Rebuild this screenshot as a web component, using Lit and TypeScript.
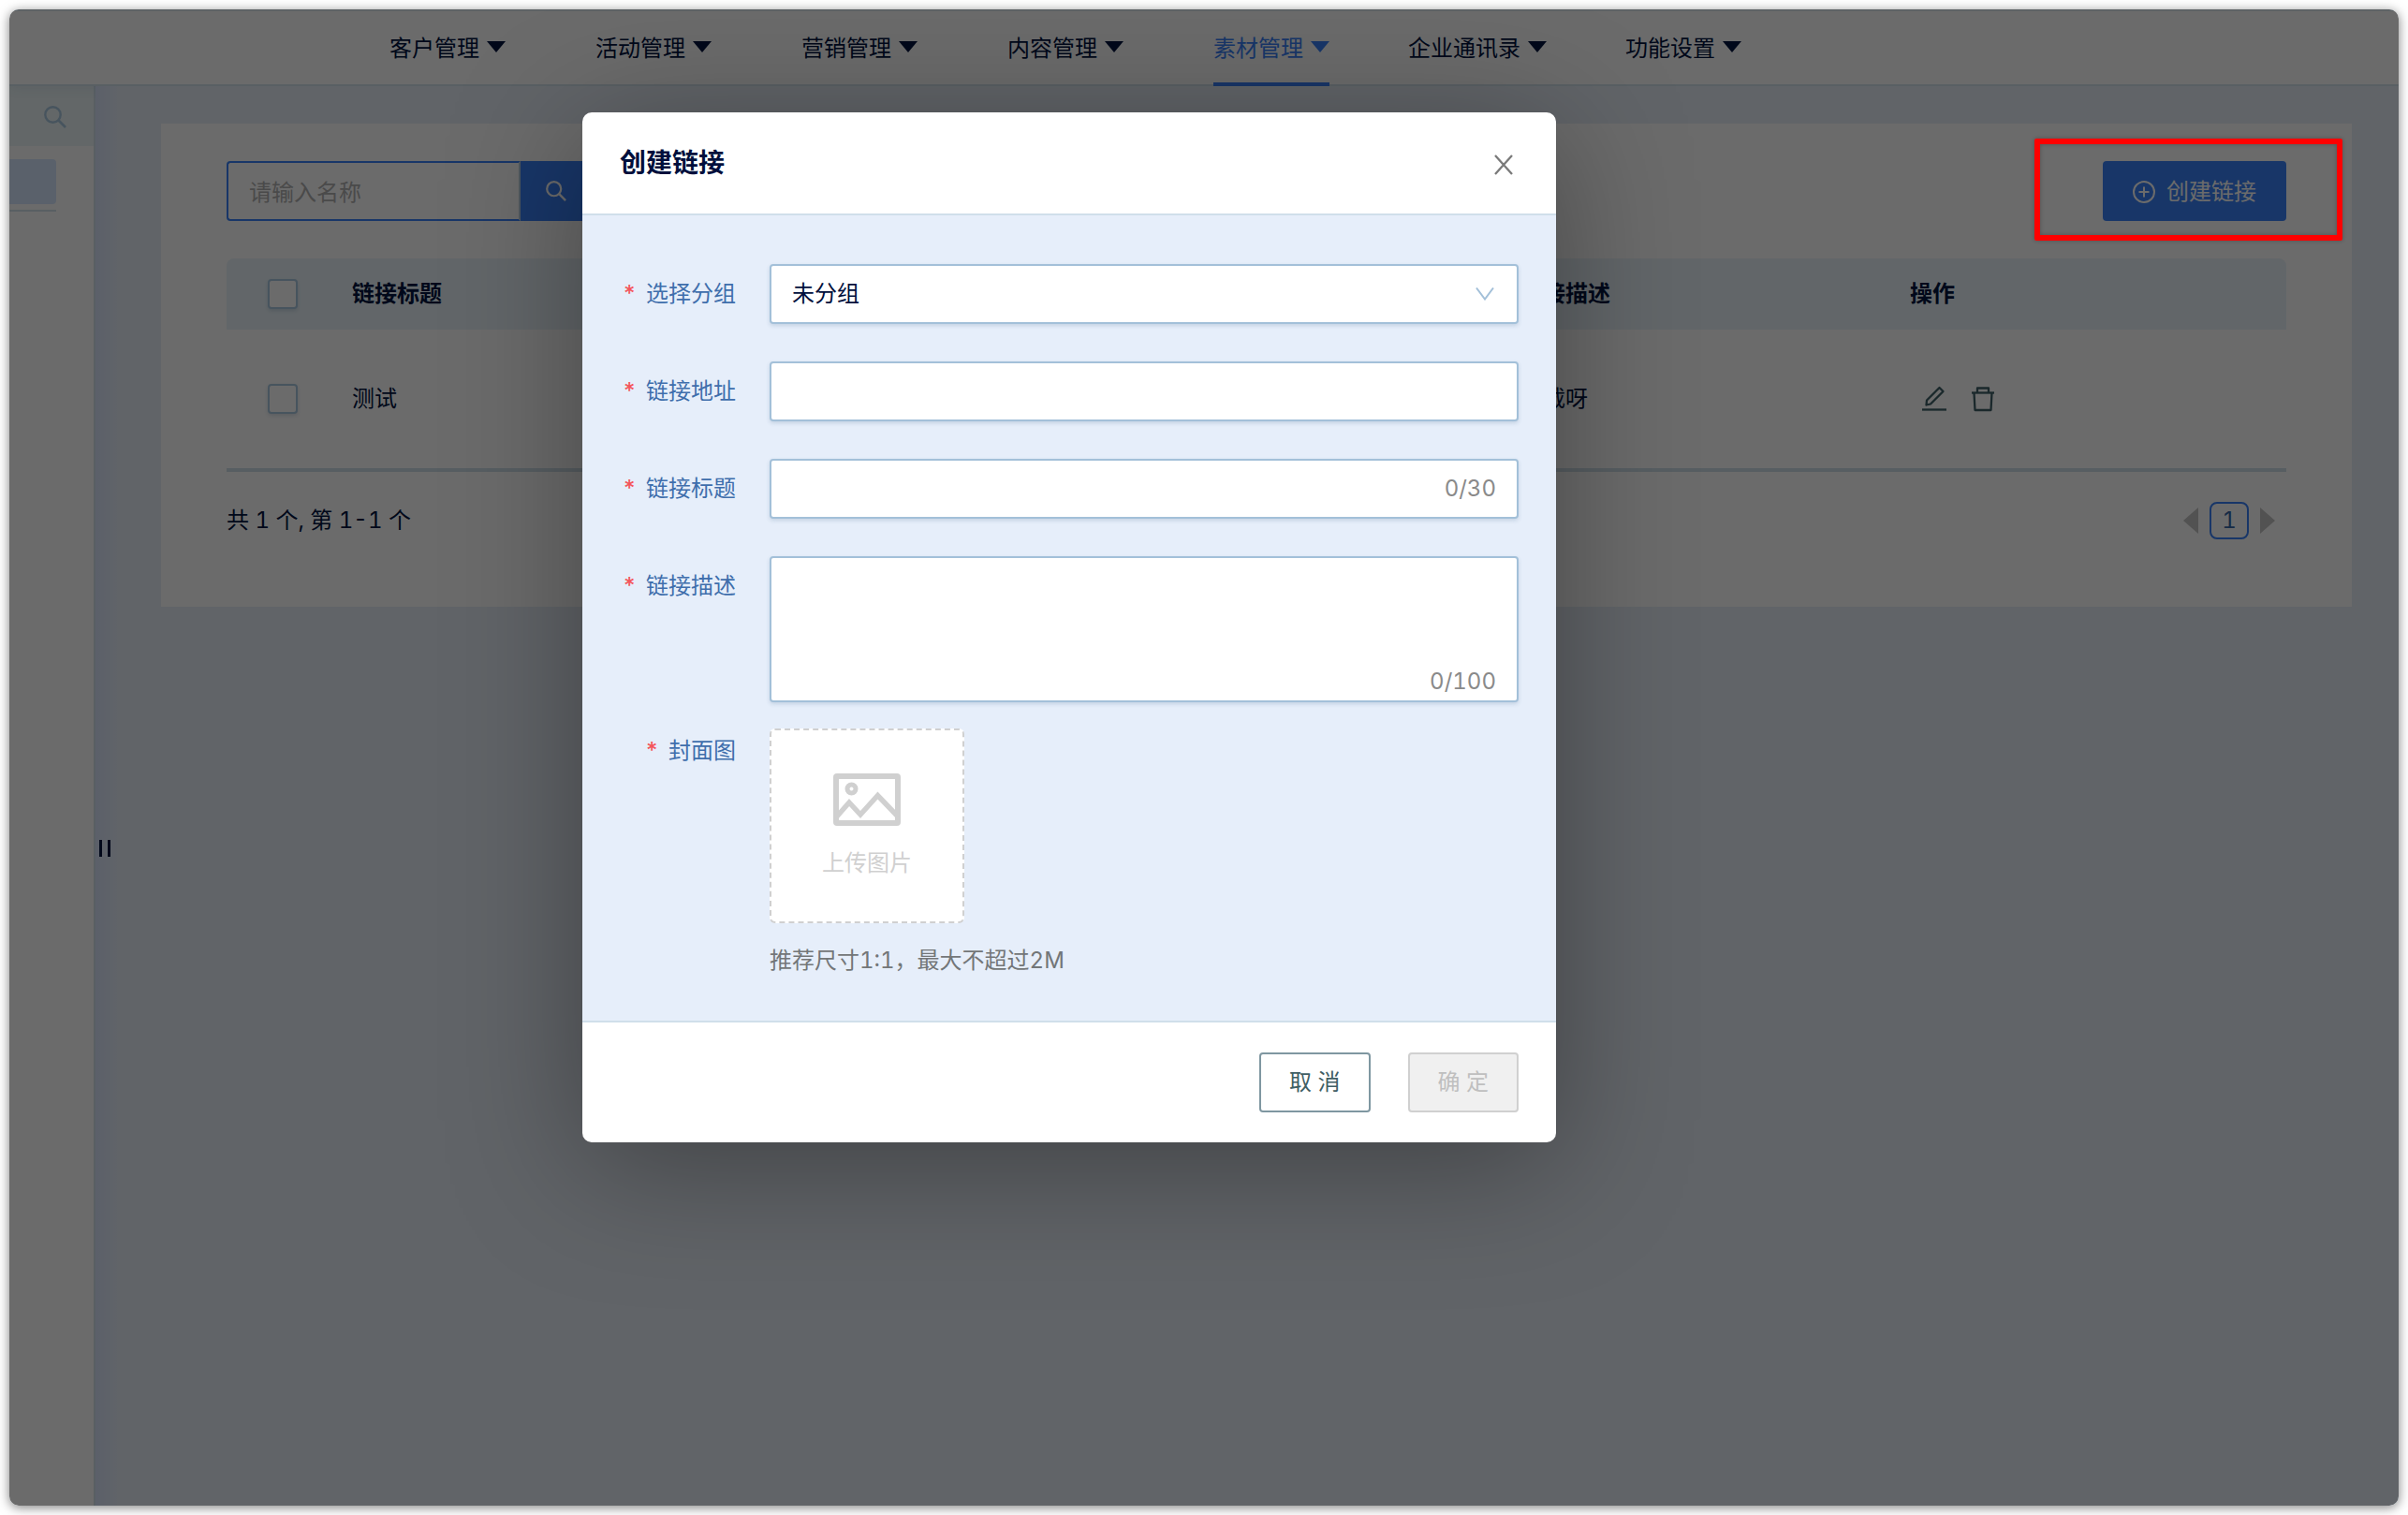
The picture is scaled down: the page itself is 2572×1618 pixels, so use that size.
import { LitElement, html, css, svg } from "lit";
import { customElement } from "lit/decorators.js";
import { classMap } from "lit/directives/class-map.js";

const NAV = ["客户管理", "活动管理", "营销管理", "内容管理", "素材管理", "企业通讯录", "功能设置"];
const ACTIVE = "素材管理";

const searchShape = svg`
  <circle cx="9.5" cy="9.5" r="8.200" fill="none" stroke="currentColor" stroke-width="2.400"/>
  <path d="M15.5 15.5 L23 23" fill="none" stroke="currentColor" stroke-width="2.600"/>`;

@customElement("app-root")
export class AppRoot extends LitElement {
  static styles = css`
    :host {
      display: block;
      font-family: Inter, "Noto Sans CJK SC", sans-serif;
      font-size: 24px;
      font-variant-numeric: tabular-nums;
      line-height: 36px;
      color: #00143f;
    }
    * { box-sizing: border-box; }
    button, input, select, textarea { font: inherit; color: inherit; margin: 0; }
    button { background: none; border: 0; padding: 0; }
    svg { display: block; flex: none; }
    .page {
      display: flex;
      min-height: 100vh;
      padding: 10px;
      background: #fff;
    }
    .window {
      position: relative;
      flex: 1;
      display: flex;
      flex-direction: column;
      min-width: 0;
      border-radius: 10px;
      overflow: hidden;
      background: #e7eff8;
    }
    .frame {
      flex: 1;
      display: flex;
      min-width: 0;
      border-radius: 10px;
      box-shadow: 0 2px 12px rgba(0, 0, 0, 0.5);
    }

    .topbar {
      display: flex;
      height: 82px;
      padding-left: 358px;
      background: #fff;
      border-top: 2px solid #e0ecf2;
      border-bottom: 2px solid #d3e2ec;
      box-shadow: 0 2px 12px rgba(60, 100, 140, 0.1);
      position: relative;
    }
    .nav-cell { width: 220px; display: flex; justify-content: center; margin-bottom: -2px; }
    .nav-link {
      display: flex;
      align-items: center;
      gap: 8px;
      color: inherit;
      text-decoration: none;
      white-space: nowrap;
      border-bottom: 4px solid transparent;
      padding-top: 4px;
    }
    .nav-link.active { color: #3a82f8; border-color: #3a82f8; }
    .nav-arrow { margin-bottom: 4px; }

    .body { flex: 1; display: flex; }
    .side {
      width: 92px;
      background: #fff;
      border-right: 2px solid #d3e2ec;
    }
    .side-search {
      display: flex;
      width: 100%;
      height: 64px;
      padding: 21px 0 0 37px;
      background: #ebf5f7;
      color: #a9c8e0;
    }
    .side-item {
      display: block;
      width: 50px;
      height: 48px;
      margin-top: 14px;
      background: #d6e8ff;
      border-radius: 0 4px 4px 0;
    }
    .side-rule { width: 50px; margin-top: 6px; border-top: 2px solid #d3e2ec; }
    .main {
      position: relative;
      flex: 1;
      padding: 40px 50px 40px 70px;
      background: linear-gradient(90deg, #dae4fc, #e7eff8 26px);
    }
    .grip {
      position: absolute;
      left: 4px;
      top: calc(50% + 47px);
      display: flex;
      gap: 6px;
    }
    .grip-bar { width: 3px; height: 18px; background: #00143f; }

    .card { background: #fff; padding: 40px 70px 72px; }
    .toolbar { display: flex; justify-content: space-between; }
    .search { display: flex; }
    .search-input {
      width: 314px;
      height: 64px;
      padding: 2px 22px 0;
      background: #fff;
      border: 2px solid #3a82f8;
      border-right-color: #b9cfe0;
      border-radius: 4px 0 0 4px;
    }
    .search-input::placeholder { color: #b0b0b0; opacity: 1; }
    .search-btn {
      display: grid;
      place-items: center;
      width: 76px;
      background: #3a82f8;
      color: #fff;
      border-radius: 0 4px 4px 0;
    }
    .create-wrap { position: relative; }
    .create {
      display: flex;
      align-items: center;
      gap: 12px;
      height: 64px;
      padding: 2px 32px 0;
      background: #3a82f8;
      color: #fff;
      border-radius: 4px;
    }
    .marker {
      position: absolute;
      z-index: 20;
      inset: -24px -60px -21px -73px;
      border: 6px solid #fe0000;
      border-radius: 2px;
      box-shadow: 0 0 4px rgba(0, 0, 0, 0.25), inset 0 0 4px rgba(0, 0, 0, 0.25);
      pointer-events: none;
    }

    .table {
      width: 100%;
      margin-top: 40px;
      table-layout: fixed;
      border-collapse: separate;
      border-spacing: 0;
      text-align: left;
    }
    .table th { height: 76px; padding: 0; background: #eaf4fa; font-weight: 700; }
    .table td { height: 152px; padding: 0; border-bottom: 4px solid #cfe1ea; }
    .table th:first-child { border-top-left-radius: 8px; }
    .table th:last-child { border-top-right-radius: 8px; }
    .col-check { width: 134px; }
    .col-desc { width: 416px; }
    .col-ops { width: 402px; }
    .check {
      appearance: none;
      display: block;
      width: 32px;
      height: 32px;
      margin-left: 44px;
      background: #fff;
      border: 2px solid #a9c8e0;
      border-radius: 4px;
      box-shadow: 0 2px 4px rgba(60, 100, 140, 0.2);
    }
    .ops { display: flex; gap: 24px; padding-left: 12px; color: #3f6068; }
    .pager { display: flex; justify-content: space-between; align-items: center; margin-top: 32px; height: 40px; }
    .pages { display: flex; align-items: center; gap: 12px; padding-right: 12px; }
    .page-no {
      width: 42px;
      height: 40px;
      border: 2px solid #3a82f8;
      border-radius: 8px;
      color: #3566a8;
    }
    .page-arrow { color: #c4c4c4; }

    .mask {
      position: absolute;
      inset: 0;
      z-index: 10;
      display: flex;
      justify-content: center;
      align-items: flex-start;
      padding: 110px 288px 40px 0;
      background: rgba(0, 0, 0, 0.58);
    }
    .modal {
      width: 1040px;
      background: #fff;
      border-radius: 10px;
      box-shadow: 0 24px 140px rgba(0, 0, 0, 0.35);
      overflow: hidden;
    }
    .modal-head {
      display: flex;
      align-items: center;
      justify-content: space-between;
      height: 110px;
      padding: 0 46px 0 40px;
      border-bottom: 2px solid #d0dfea;
    }
    .modal-title { margin: 0; font-size: 28px; line-height: 40px; font-weight: 700; color: #000f3c; }
    .close { padding-top: 4px; color: #7a7a7a; }
    .form { background: #e6eefa; padding: 52px 40px 46px; }
    .row {
      display: grid;
      grid-template-columns: 124px 800px;
      column-gap: 36px;
      margin-bottom: 40px;
    }
    .row.tight { margin-bottom: 28px; }
    .row.last { margin-bottom: 0; }
    .label { padding-top: 14px; text-align: right; color: #3f6eac; }
    .label.high { padding-top: 6px; }
    .star { color: #f4565c; margin-right: 10px; font-weight: 500; }
    .control { position: relative; display: flex; }
    .field {
      appearance: none;
      width: 100%;
      height: 64px;
      padding: 0 22px;
      background: #fff;
      border: 2px solid #a3c0d9;
      border-radius: 4px;
      color: #000f3c;
      box-shadow: 0 2px 4px rgba(60, 100, 140, 0.2);
    }
    .area { height: 156px; padding: 12px 22px; resize: none; }
    .chevron { position: absolute; right: 26px; top: 25px; color: #a3c0d9; pointer-events: none; }
    .count { position: absolute; right: 24px; bottom: 14px; color: #8a8a8a; }
    .count.low { bottom: 4px; }
    .upload {
      display: flex;
      flex-direction: column;
      align-items: center;
      width: 208px;
      height: 208px;
      padding-top: 46px;
      gap: 22px;
      background: #fff;
      border: 2px dashed #d0d0d0;
      border-radius: 6px;
      color: #d0d0d0;
    }
    .hint { margin: 22px 0 0; color: #737678; }
    .modal-foot {
      display: flex;
      justify-content: flex-end;
      gap: 40px;
      padding: 32px 40px;
      border-top: 2px solid #d0dfea;
    }
    .btn { height: 64px; padding: 0 30px; border: 2px solid #7f97a1; border-radius: 4px; color: #3f5e64; }
    .btn:disabled { background: #f0f0f0; border-color: #d0d0d0; color: #bfbfbf; }
  `;

  private label(text: string, target: string, high = false) {
    return html`<label class=${classMap({ label: true, high })} for=${target}
      ><span class="star">*</span>${text}</label>`;
  }

  private searchIcon(size: number) {
    return html`<svg width=${size} height=${size} viewBox="0 0 24 24">${searchShape}</svg>`;
  }

  private modal() {
    return html`
      <div class="mask">
        <section class="modal" role="dialog" aria-labelledby="title">
          <header class="modal-head">
            <h2 class="modal-title" id="title">创建链接</h2>
            <button class="close" aria-label="关闭">
              <svg width="20" height="22" viewBox="0 0 20 22">
                <path d="M1 1 L19 21 M19 1 L1 21" fill="none" stroke="currentColor" stroke-width="2.300"/>
              </svg>
            </button>
          </header>
          <form class="form">
            <div class="row">
              ${this.label("选择分组", "group")}
              <div class="control">
                <select class="field" id="group"><option>未分组</option></select>
                <svg class="chevron" width="20" height="14" viewBox="0 0 20 14">
                  <path d="M1 0.5 L10 12.5 L19 0.5" fill="none" stroke="currentColor" stroke-width="2"/>
                </svg>
              </div>
            </div>
            <div class="row">
              ${this.label("链接地址", "url")}
              <div class="control"><input class="field" id="url" type="text" /></div>
            </div>
            <div class="row">
              ${this.label("链接标题", "name")}
              <div class="control">
                <input class="field" id="name" type="text" maxlength="30" />
                <span class="count">0/30</span>
              </div>
            </div>
            <div class="row tight">
              ${this.label("链接描述", "desc")}
              <div class="control">
                <textarea class="field area" id="desc" maxlength="100"></textarea>
                <span class="count low">0/100</span>
              </div>
            </div>
            <div class="row last">
              ${this.label("封面图", "cover", true)}
              <div>
                <button class="upload" id="cover" type="button">
                  <svg width="72" height="56" viewBox="0 0 72 56" fill="none" stroke="currentColor" stroke-width="6">
                    <rect x="3" y="3" width="66" height="50" rx="1"/>
                    <circle cx="19.5" cy="16.5" r="4.5" stroke-width="5"/>
                    <path d="M3 47 L17 31 L29 44 L47.500 23.500 L69 46" stroke-width="5.500"/>
                  </svg>
                  <span>上传图片</span>
                </button>
                <p class="hint">推荐尺寸1:1，最大不超过2M</p>
              </div>
            </div>
          </form>
          <footer class="modal-foot">
            <button class="btn">取 消</button>
            <button class="btn" disabled>确 定</button>
          </footer>
        </section>
      </div>`;
  }

  render() {
    return html`
      <div class="page"><div class="frame"><div class="window">
        <nav class="topbar">
          ${NAV.map((item) => html`
            <div class="nav-cell">
              <a href="#" class=${classMap({ "nav-link": true, active: item === ACTIVE })}>
                ${item}
                <svg class="nav-arrow" width="20" height="12" viewBox="0 0 20 12">
                  <path d="M0 0 H20 L10 12 Z" fill="currentColor"/>
                </svg>
              </a>
            </div>`)}
        </nav>
        <div class="body">
          <aside class="side">
            <button class="side-search" aria-label="搜索">${this.searchIcon(24)}</button>
            <a class="side-item" href="#" aria-label="分组"></a>
            <div class="side-rule"></div>
          </aside>
          <main class="main">
            <div class="grip"><span class="grip-bar"></span><span class="grip-bar"></span></div>
            <div class="card">
              <div class="toolbar">
                <div class="search">
                  <input class="search-input" type="text" placeholder="请输入名称" aria-label="名称" />
                  <button class="search-btn" aria-label="搜索">${this.searchIcon(22)}</button>
                </div>
                <div class="create-wrap">
                  <button class="create">
                    <svg width="24" height="24" viewBox="0 0 24 24" fill="none" stroke="currentColor" stroke-width="2">
                      <circle cx="12" cy="12" r="11"/><path d="M12 6.500 V17.500 M6.500 12 H17.500"/>
                    </svg>
                    创建链接
                  </button>
                  <div class="marker"></div>
                </div>
              </div>
              <table class="table">
                <colgroup><col class="col-check" /><col /><col class="col-desc" /><col class="col-ops" /></colgroup>
                <thead>
                  <tr>
                    <th><input class="check" type="checkbox" aria-label="全选" /></th>
                    <th>链接标题</th><th>链接描述</th><th>操作</th>
                  </tr>
                </thead>
                <tbody>
                  <tr>
                    <td><input class="check" type="checkbox" aria-label="测试" /></td>
                    <td>测试</td><td>下载呀</td>
                    <td>
                      <div class="ops">
                        <button aria-label="编辑">
                          <svg width="28" height="28" viewBox="0 0 28 28" fill="none" stroke="currentColor" stroke-width="2.300" stroke-linejoin="round">
                            <path d="M5.500 20.500 L6 15.500 L19.500 2 L23.500 6 L10 19.500 Z"/>
                            <path d="M1 25.500 H27"/>
                          </svg>
                        </button>
                        <button aria-label="删除">
                          <svg width="28" height="28" viewBox="0 0 28 28" fill="none" stroke="currentColor" stroke-width="2.300" stroke-linejoin="round">
                            <path d="M2 7.500 H26"/><path d="M8 7.500 V2.500 H20 V7.500"/>
                            <path d="M4.500 7.500 L5.500 26 H22.500 L23.500 7.500"/>
                          </svg>
                        </button>
                      </div>
                    </td>
                  </tr>
                </tbody>
              </table>
              <div class="pager">
                <span>共 1 个, 第 1-1 个</span>
                <div class="pages">
                  <button class="page-arrow" aria-label="上一页">
                    <svg width="16" height="28" viewBox="0 0 16 28"><path d="M16 0 V28 L0 14 Z" fill="currentColor"/></svg>
                  </button>
                  <button class="page-no">1</button>
                  <button class="page-arrow" aria-label="下一页">
                    <svg width="16" height="28" viewBox="0 0 16 28"><path d="M0 0 V28 L16 14 Z" fill="currentColor"/></svg>
                  </button>
                </div>
              </div>
            </div>
          </main>
        </div>
        ${this.modal()}
      </div></div></div>`;
  }
}
